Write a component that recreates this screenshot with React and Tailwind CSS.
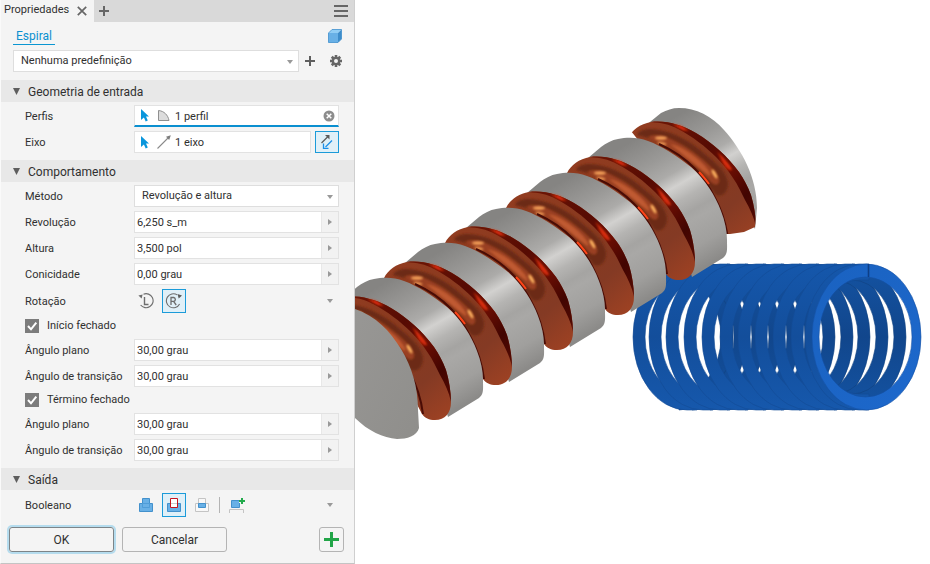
import React, { useState } from "react";

const STEP_X = 61;
const STEP_Y = -35;

const grooves = [5, 4, 3, 2, 1, 0];

// centres of the visible half turns of the spring
const backTurns = [679, 692, 710, 727, 745, 763, 781, 799, 816, 834, 852];
const frontTurns = [687, 703, 720, 738, 756, 774, 792, 809, 827, 845, 859];

const backTurn = (cx) => `M${cx} 264 A54 73 0 0 1 ${cx} 410 V394 A42 57 0 0 0 ${cx} 280 Z`;

const frontTurn = (cx) =>
  `M${cx + 10} 264 H${cx} A54 73 0 0 0 ${cx} 410 H${cx + 10} V394 H${cx} A42 57 0 0 1 ${cx} 280 H${cx + 10} Z`;

const CursorIcon = () => (
  <svg className="shrink-0" width="8" height="13" viewBox="0 0 8 13" aria-hidden="true">
    <path d="M0 0 L8 7.5 H5 L6.8 11.6 L4.7 12.6 L2.9 8.6 L0 11 Z" fill="#0a96dc" />
  </svg>
);

const ProfileIcon = () => (
  <svg className="shrink-0" width="14" height="14" viewBox="0 0 14 14" aria-hidden="true">
    <path d="M1.5 1.5 C7 2 11 6 12 11.5 H1.5 Z" fill="#dcdcdc" stroke="#8f8f8f" />
  </svg>
);

const AxisIcon = () => (
  <svg className="shrink-0" width="14" height="14" viewBox="0 0 14 14" aria-hidden="true">
    <path d="M0.5 13.5 L11 3" stroke="#8a8a8a" strokeWidth="1.1" />
    <path d="M13.8 0.2 L9 1.8 L12.2 5 Z" fill="#7d7d7d" />
  </svg>
);

const FlipIcon = () => (
  <svg width="12" height="14" viewBox="0 0 12 14" aria-hidden="true">
    <path d="M0.5 8 L7 1.5" stroke="#5a5a5a" strokeWidth="1.2" />
    <path d="M8.5 0 V4.5 L4 0 Z" fill="#5a5a5a" />
    <path d="M11 5.5 L4.5 12" stroke="#1a8fe8" strokeWidth="1.3" />
    <path d="M2.5 8.5 V13.5 H7.5" fill="none" stroke="#1a8fe8" strokeWidth="1.3" />
  </svg>
);

const RotationIcon = ({ letter }) => (
  <svg width="18" height="16" viewBox="0 0 18 16" aria-hidden="true">
    {letter === "L" ? (
      <>
        <path d="M6.5 1.2 A7 7 0 1 1 3.6 12" fill="none" stroke="#6d6d6d" strokeWidth="1.1" />
        <path d="M1.4 2.4 L5.6 1.6 L4.6 5.4 Z" fill="#6d6d6d" />
        <path d="M7.5 4 V11.5 H11.5" fill="none" stroke="#6d6d6d" strokeWidth="1.4" />
      </>
    ) : (
      <>
        <path d="M12.2 1.9 A7 7 0 1 0 14.6 11" fill="none" stroke="#6d6d6d" strokeWidth="1.1" />
        <path d="M17 2.4 L12.5 1 L13.7 5.6" fill="#5a5a5a" />
        <path d="M6 12 V4.5 H8.8 A2 2 0 0 1 8.8 8.4 H6 M8.6 8.4 L11.2 12" fill="none" stroke="#6d6d6d" strokeWidth="1.3" />
      </>
    )}
  </svg>
);

const CubeIcon = () => (
  <svg width="14" height="14" viewBox="0 0 14 14" aria-hidden="true">
    <path d="M0.5 4 L4 0.5 H13.5 L10 4 Z" fill="#90cdf5" />
    <path d="M10 4 L13.5 0.5 V10 L10 13.5 Z" fill="#3d8cca" />
    <path d="M0.5 4 H10 V13.5 H0.5 Z" fill="#68b0e6" />
    <path d="M0.5 4 L4 0.5 H13.5 V10 L10 13.5 H0.5 Z" fill="none" stroke="#3f8fcd" strokeWidth="0.8" />
  </svg>
);

const GearIcon = () => (
  <svg width="12" height="12" viewBox="-6 -6 12 12" aria-hidden="true">
    {[0, 45, 90, 135].map((angle) => (
      <rect key={angle} x="-1.3" y="-6" width="2.6" height="12" fill="#666" transform={`rotate(${angle})`} />
    ))}
    <circle r="4.3" fill="#666" />
    <circle r="2" fill="#f4f4f4" />
  </svg>
);

const BooleanIcon = ({ kind }) => {
  if (kind === "join") {
    return (
      <svg width="14" height="14" viewBox="0 0 14 14" aria-hidden="true">
        <path d="M3.5 0.5 H10.5 V5.5 H13.5 V13.5 H0.5 V5.5 H3.5 Z" fill="#68b0e6" stroke="#4391cc" />
        <path d="M3.5 5.5 V9.5 H10.5 V5.5 Z" fill="none" stroke="#4f9dd8" />
      </svg>
    );
  }
  if (kind === "cut") {
    return (
      <svg width="14" height="14" viewBox="0 0 14 14" aria-hidden="true">
        <path d="M0.5 5.5 H13.5 V13.5 H0.5 Z" fill="#68b0e6" stroke="#4391cc" />
        <path d="M3.5 0.5 H10.5 V9.5 H3.5 Z" fill="#fff" stroke="#c8141e" />
        <path d="M4 5.5 H10" stroke="#ccc" />
      </svg>
    );
  }
  if (kind === "intersect") {
    return (
      <svg width="14" height="14" viewBox="0 0 14 14" aria-hidden="true">
        <path d="M0.5 5.5 H13.5 V13.5 H0.5 Z M3.5 0.5 H10.5 V5.5 H3.5 Z" fill="#f8f8f8" stroke="#c4c4c4" />
        <path d="M3.5 5.5 H10.5 V9.5 H3.5 Z" fill="#68b0e6" stroke="#4391cc" />
      </svg>
    );
  }
  return (
    <svg width="16" height="16" viewBox="0 0 16 16" aria-hidden="true">
      <path d="M2.5 3.5 H10.5 V10.5 H2.5 Z" fill="#68b0e6" stroke="#4391cc" />
      <path d="M0.5 16 V12.5 H14.5 V16" fill="none" stroke="#c4c4c4" />
      <path d="M13 1 V7 M10 4 H16" stroke="#f4f4f4" strokeWidth="4" />
      <path d="M13 1 V7 M10 4 H16" stroke="#22aa4b" strokeWidth="2" />
    </svg>
  );
};

const DownArrow = ({ className }) => (
  <svg className={className} width="6" height="4" viewBox="0 0 6 4" aria-hidden="true">
    <path d="M0 0 H6 L3 4 Z" fill="#999" />
  </svg>
);

const Section = ({ title, children }) => (
  <section className="pb-[5px]">
    <h2 className="flex h-[22px] items-center gap-2 bg-[#e8e8e8] pt-px pl-3 text-[12px]">
      <svg width="7" height="7" viewBox="0 0 7 7" aria-hidden="true">
        <path d="M0 0 H7 L3.5 7 Z" fill="#5e5e5e" />
      </svg>
      {title}
    </h2>
    <div className="pt-px pr-[15px] pl-6">{children}</div>
  </section>
);

const Row = ({ label, htmlFor, tall, children }) => (
  <div className={tall ? "flex h-7 items-center" : "flex h-[26px] items-center"}>
    <label htmlFor={htmlFor} className="w-[109px] shrink-0 pt-px whitespace-nowrap">
      {label}
    </label>
    <div className="flex min-w-0 flex-1 items-center">{children}</div>
  </div>
);

const ValueRow = ({ id, label, value }) => (
  <Row label={label} htmlFor={id}>
    <div className="flex h-[22px] w-full border border-[#e2e2e2] bg-white">
      <input id={id} type="text" defaultValue={value} className="min-w-0 flex-1 px-0.5 pt-0.5 outline-none" />
      <button type="button" aria-label="Mais opções" className="flex w-[17px] items-center justify-center border-l border-[#e8e8e8] bg-[#f2f2f2]">
        <svg width="4" height="6" viewBox="0 0 4 6" aria-hidden="true">
          <path d="M0 0 L4 3 L0 6 Z" fill="#999" />
        </svg>
      </button>
    </div>
  </Row>
);

const CheckRow = ({ label }) => (
  <label className="flex h-[22px] items-center gap-2">
    <span className="relative flex size-[14px]">
      <input type="checkbox" defaultChecked className="peer size-[14px] appearance-none bg-[#7c7c7c]" />
      <svg className="pointer-events-none absolute inset-0 hidden peer-checked:block" width="14" height="14" viewBox="0 0 14 14" aria-hidden="true">
        <path d="M3 7 L6 10.3 L11.3 3.6" fill="none" stroke="#fff" strokeWidth="2" />
      </svg>
    </span>
    {label}
  </label>
);

const ToggleButton = ({ active, label, onClick, children }) => (
  <button
    type="button"
    aria-label={label}
    aria-pressed={active}
    onClick={onClick}
    className={
      active
        ? "flex size-6 items-center justify-center border border-[#1b9bd9] bg-[#e0f0f8]"
        : "flex size-6 items-center justify-center"
    }
  >
    {children}
  </button>
);

const PropertiesPanel = () => {
  const [rotation, setRotation] = useState("R");
  const [operation, setOperation] = useState("cut");
  const [flipped, setFlipped] = useState(true);

  return (
    <aside className="w-[355px] shrink-0 border-r border-b border-l border-r-[#cfcfcf] border-b-[#c4c4c4] border-l-[#fafafa] bg-[#f4f4f4]">
      <div className="flex h-[22px] items-center bg-[#d9d9d9]">
        <div className="flex h-full w-[93px] items-center justify-between bg-[#f4f4f4] pr-[7px] pl-[3px]">
          <span className="pb-0.5">Propriedades</span>
          <button type="button" aria-label="Fechar">
            <svg width="10" height="10" viewBox="0 0 10 10" aria-hidden="true">
              <path d="M0.8 0.8 L9.2 9.2 M9.2 0.8 L0.8 9.2" stroke="#666" strokeWidth="1.7" />
            </svg>
          </button>
        </div>
        <button type="button" aria-label="Nova guia" className="ml-[5px]">
          <svg width="10" height="10" viewBox="0 0 10 10" aria-hidden="true">
            <path d="M5 0 V10 M0 5 H10" stroke="#666" strokeWidth="2" />
          </svg>
        </button>
        <button type="button" aria-label="Menu" className="mr-[6px] ml-auto">
          <svg width="14" height="12" viewBox="0 0 14 12" aria-hidden="true">
            <path d="M0 1 H14 M0 6 H14 M0 11 H14" stroke="#666" strokeWidth="2" />
          </svg>
        </button>
      </div>

      <div className="flex h-7 items-center justify-between pr-3 pl-3">
        <a href="#espiral" className="border-b border-[#0a96d2] px-[3px] text-[12px] text-[#0a90d0]">
          Espiral
        </a>
        <CubeIcon />
      </div>
      <div className="flex h-[30px] items-start pr-3 pl-3">
        <div className="relative w-[286px]">
          <select aria-label="Predefinição" className="h-[22px] w-full appearance-none border border-[#dedede] bg-white pl-[7px]">
            <option>Nenhuma predefinição</option>
          </select>
          <DownArrow className="pointer-events-none absolute top-[10px] right-[6px]" />
        </div>
        <button type="button" aria-label="Adicionar predefinição" className="ml-[6px] flex h-[22px] items-center">
          <svg width="10" height="10" viewBox="0 0 10 10" aria-hidden="true">
            <path d="M5 0 V10 M0 5 H10" stroke="#5e5e5e" strokeWidth="2" />
          </svg>
        </button>
        <button type="button" aria-label="Configurações" className="ml-auto flex h-[22px] items-center">
          <GearIcon />
        </button>
      </div>

      <Section title="Geometria de entrada">
        <Row label="Perfis" htmlFor="perfis">
          <div className="flex h-[22px] w-full items-center gap-2 border border-b-2 border-[#e2e2e2] border-b-[#0a8fd0] bg-white pr-[3px] pl-[6px]">
            <CursorIcon />
            <ProfileIcon />
            <input id="perfis" type="text" defaultValue="1 perfil" className="-ml-1 min-w-0 flex-1 pt-0.5 outline-none" />
            <button type="button" aria-label="Limpar">
              <svg width="12" height="12" viewBox="0 0 12 12" aria-hidden="true">
                <circle cx="6" cy="6" r="5.5" fill="#8c8c8c" />
                <path d="M3.7 3.7 L8.3 8.3 M8.3 3.7 L3.7 8.3" stroke="#fff" strokeWidth="1.5" />
              </svg>
            </button>
          </div>
        </Row>
        <Row label="Eixo" htmlFor="eixo">
          <div className="flex h-[22px] min-w-0 flex-1 items-center gap-2 border border-[#e2e2e2] bg-white pl-[6px]">
            <CursorIcon />
            <AxisIcon />
            <input id="eixo" type="text" defaultValue="1 eixo" className="-ml-1 min-w-0 flex-1 pt-0.5 outline-none" />
          </div>
          <button
            type="button"
            aria-label="Inverter eixo"
            aria-pressed={flipped}
            onClick={() => setFlipped(!flipped)}
            className="ml-1 flex h-[22px] w-6 items-center justify-center border border-[#1b9bd9] bg-[#e0f0f8]"
          >
            <FlipIcon />
          </button>
        </Row>
      </Section>

      <Section title="Comportamento">
        <Row label="Método" htmlFor="metodo">
          <div className="relative w-full">
            <select id="metodo" className="block h-[22px] w-full appearance-none border border-[#dedede] bg-white pl-[7px]">
              <option>Revolução e altura</option>
            </select>
            <DownArrow className="pointer-events-none absolute top-[10px] right-[6px]" />
          </div>
        </Row>
        <ValueRow id="revolucao" label="Revolução" value="6,250 s_m" />
        <ValueRow id="altura" label="Altura" value="3,500 pol" />
        <ValueRow id="conicidade" label="Conicidade" value="0,00 grau" />
        <Row label="Rotação" tall>
          <ToggleButton label="Esquerda" active={rotation === "L"} onClick={() => setRotation("L")}>
            <RotationIcon letter="L" />
          </ToggleButton>
          <span className="w-1" />
          <ToggleButton label="Direita" active={rotation === "R"} onClick={() => setRotation("R")}>
            <RotationIcon letter="R" />
          </ToggleButton>
          <DownArrow className="mr-[6px] ml-auto" />
        </Row>
        <CheckRow label="Início fechado" />
        <ValueRow id="inicio-plano" label="Ângulo plano" value="30,00 grau" />
        <ValueRow id="inicio-transicao" label="Ângulo de transição" value="30,00 grau" />
        <CheckRow label="Término fechado" />
        <ValueRow id="termino-plano" label="Ângulo plano" value="30,00 grau" />
        <ValueRow id="termino-transicao" label="Ângulo de transição" value="30,00 grau" />
      </Section>

      <Section title="Saída">
        <Row label="Booleano" tall>
          <div className="flex items-center gap-1">
            <ToggleButton label="União" active={operation === "join"} onClick={() => setOperation("join")}>
              <BooleanIcon kind="join" />
            </ToggleButton>
            <ToggleButton label="Recorte" active={operation === "cut"} onClick={() => setOperation("cut")}>
              <BooleanIcon kind="cut" />
            </ToggleButton>
            <ToggleButton label="Interseção" active={operation === "intersect"} onClick={() => setOperation("intersect")}>
              <BooleanIcon kind="intersect" />
            </ToggleButton>
            <span className="mx-px h-4 w-px bg-[#b4b4b4]" />
            <ToggleButton label="Novo sólido" active={operation === "new"} onClick={() => setOperation("new")}>
              <BooleanIcon kind="new" />
            </ToggleButton>
          </div>
          <DownArrow className="mr-[6px] ml-auto" />
        </Row>
      </Section>

      <div className="flex gap-2 pt-[3px] pr-[10px] pb-[11px] pl-2 text-[12px]">
        <button type="button" className="h-[25px] w-[105px] rounded-[3px] border border-[#7d8488] ring-2 ring-[#b5dcee]">
          OK
        </button>
        <button type="button" className="h-[25px] w-[105px] rounded-[3px] border border-[#b4b4b4]">
          Cancelar
        </button>
        <button type="button" aria-label="Aplicar" className="ml-auto flex size-[25px] items-center justify-center rounded-[3px] border border-[#b4b4b4]">
          <svg width="15" height="15" viewBox="0 0 15 15" aria-hidden="true">
            <path d="M7.5 0 V15 M0 7.5 H15" stroke="#22a548" strokeWidth="3" />
          </svg>
        </button>
      </div>
    </aside>
  );
};

const Spring = () => (
  <g>
    {backTurns.map((cx) => (
      <path key={cx} d={backTurn(cx)} fill="url(#springBack)" stroke="#10427f" strokeWidth="0.6" />
    ))}
    {frontTurns.map((cx) => (
      <path key={cx} d={frontTurn(cx)} fill="url(#springFront)" stroke="#124a94" strokeWidth="0.6" />
    ))}
    <path
      d="M812 337 A54.5 73 0 1 1 921 337 A54.5 73 0 1 1 812 337 Z M819 337 A46.5 60 0 1 0 912 337 A46.5 60 0 1 0 819 337 Z"
      fill="url(#springEnd)"
      fillRule="evenodd"
      stroke="#1450a4"
      strokeWidth="0.6"
    />
    <path d="M868.5 264 V277" stroke="#0e3f86" strokeWidth="1.6" />
  </g>
);

const Band = () => (
  <path
    d="M405 263 L418 252 C423 248 429 245 435 244 C444 242 455 242 465 246 C479 251 494 261 508 272 C522 284 533 302 538 316 C542 326 544 336 544 345 C544 354 545 359 540 363 L509 382 L490 320 Z"
    fill="url(#steel)"
  />
);

const Groove = () => (
  <g>
    <path
      d="M384 278 C388 270 396 264 407 262 C422 260 438 265 452 273 C461 278 468 284 475 290 C483 297 489 304 495 312 C500 319 504 327 507 335 C510 345 512 357 512 367 C512 378 506 385 496 385 C490 385 486 383 483 379 L460 335 L420 295 Z"
      fill="url(#copper)"
    />
    {/* shaded wall */}
    <path
      d="M407 262 C422 260 438 265 452 273 C461 278 468 284 475 290 C483 297 489 304 495 312 C500 319 504 327 507 335 C510 345 512 357 512 367 C510 357 506 349 501 340 C497 332 494 325 489 318 C484 310 478 303 472 297 C462 287 448 276 434 269 C425 264 417 263 407 262 Z"
      fill="url(#wall)"
    />
    <g filter="url(#softEdge)">
      <path
        d="M393 275 C395 269 406 267 420 271 C436 275 451 285 462 295 C474 304 483 314 484 323 C484 333 478 337 472 335 L440 296 L412 280 Z"
        fill="#6c2c16"
      />
      <path d="M404 277 C414 271 434 281 449 292 C462 302 473 311 475 319 C476 326 470 326 466 321 C454 307 440 297 422 287 Z" fill="#9a3f20" />
      <path d="M426 284 C437 286 449 294 459 304 C464 309 467 314 466 316 C456 309 442 297 426 284 Z" fill="#c05a30" />
      <path d="M428 264 L437 266 L445 271 L439 270 Z" fill="#f8300c" />
      <path d="M473 292 C479 297 485 304 488 310 L486 310 C482 304 477 298 473 292 Z" fill="#ff3a12" />
      <path d="M475 297 C480 302 483 306 485 311 L482 308 Z" fill="#e8300c" />
    </g>
    <g filter="url(#glint)">
      <ellipse cx="417" cy="278" rx="6" ry="1.8" fill="#f4a058" />
      <ellipse cx="418" cy="283.5" rx="4.5" ry="1.2" fill="#f4a058" transform="rotate(12 418 283)" />
      <ellipse cx="470.5" cy="314" rx="5" ry="1.5" fill="#ffb560" transform="rotate(60 470.5 314)" />
    </g>
    <path d="M415 284 C446 298 461 318 471 338 C478 351 482 363 484 379" fill="none" stroke="#4a0c05" strokeWidth="2" />
    <path d="M455 312 C459 316 462 320 465 324" fill="none" stroke="#ff4418" strokeWidth="2" />
  </g>
);

const Shaft = () => (
  <g>
    <path
      d="M645 126 L661 113 C667 110 672 108 679 108 C696 108 712 116 724 130 C742 150 757 178 757 208 L755 229 L735 190 Z"
      fill="url(#steel)"
    />
    {grooves.map((n) => (
      <g key={n} transform={`translate(${(n - 1) * STEP_X} ${(n - 1) * STEP_Y})`}>
        {n < 5 && <Band />}
        <g clipPath={n === 5 ? "url(#lastGroove)" : undefined}>
          <Groove />
        </g>
      </g>
    ))}
    {/* band in front of the first groove, cut by the end face */}
    <path
      d="M340 304 L355 309 C376 316 390 331 401 349 C412 367 418 387 418 410 L419 428 C417 436 407 439 397 439 C382 438 366 430 352 415 Z"
      fill="url(#steelFace)"
    />
  </g>
);

const Viewport = () => (
  <main className="min-w-0 flex-1">
    <svg className="block h-auto w-full" viewBox="355 0 575 564" role="img" aria-label="Eixo com ranhura espiral e mola">
      <defs>
        <linearGradient id="steel" gradientUnits="userSpaceOnUse" x1="393" y1="278" x2="465" y2="404">
          <stop offset="0" stopColor="#858482" />
          <stop offset="0.2" stopColor="#9a9997" />
          <stop offset="0.33" stopColor="#acaba9" />
          <stop offset="0.42" stopColor="#d2d1cf" />
          <stop offset="0.52" stopColor="#b5b4b2" />
          <stop offset="0.62" stopColor="#a5a4a2" />
          <stop offset="0.68" stopColor="#a9a8a6" />
          <stop offset="0.85" stopColor="#a09f9d" />
          <stop offset="1" stopColor="#8b8a88" />
        </linearGradient>
        <linearGradient id="steelFace" x1="0" y1="0" x2="1" y2="1">
          <stop offset="0" stopColor="#999896" />
          <stop offset="1" stopColor="#8f8e8b" />
        </linearGradient>
        <linearGradient id="copper" gradientUnits="userSpaceOnUse" x1="400" y1="265" x2="500" y2="385">
          <stop offset="0" stopColor="#913c20" />
          <stop offset="0.5" stopColor="#86391f" />
          <stop offset="0.75" stopColor="#843a24" />
          <stop offset="1" stopColor="#9c4123" />
        </linearGradient>
        <linearGradient id="wall" gradientUnits="userSpaceOnUse" x1="407" y1="262" x2="512" y2="367">
          <stop offset="0" stopColor="#6e1605" />
          <stop offset="0.4" stopColor="#560b03" />
          <stop offset="0.6" stopColor="#6c0e03" />
          <stop offset="0.8" stopColor="#420501" />
          <stop offset="1" stopColor="#560b03" />
        </linearGradient>
        <linearGradient id="springBack" gradientUnits="userSpaceOnUse" x1="0" y1="264" x2="0" y2="410">
          <stop offset="0" stopColor="#1453a2" />
          <stop offset="0.5" stopColor="#11468c" />
          <stop offset="1" stopColor="#1453a2" />
        </linearGradient>
        <linearGradient id="springFront" gradientUnits="userSpaceOnUse" x1="0" y1="264" x2="0" y2="410">
          <stop offset="0" stopColor="#1557ab" />
          <stop offset="0.5" stopColor="#134e9b" />
          <stop offset="1" stopColor="#1658ac" />
        </linearGradient>
        <linearGradient id="springEnd" x1="0" y1="0" x2="1" y2="1">
          <stop offset="0" stopColor="#1a62c0" />
          <stop offset="1" stopColor="#1d68cc" />
        </linearGradient>
        <filter id="softEdge" x="-10%" y="-10%" width="120%" height="120%">
          <feGaussianBlur stdDeviation="1" />
        </filter>
        <filter id="glint" x="-20%" y="-20%" width="140%" height="140%">
          <feGaussianBlur stdDeviation="0.8" />
        </filter>
        <clipPath id="lastGroove">
          <path d="M370 250 H520 L511 367 L500 372 L486 374 L470 374 Z" />
        </clipPath>
      </defs>
      <Spring />
      <Shaft />
    </svg>
  </main>
);

const App = () => {
  return (
    <div className="flex min-h-screen items-start bg-white font-['Roboto',sans-serif] text-[11px] leading-4 text-[#303030]">
      <PropertiesPanel />
      <Viewport />
    </div>
  );
};

export default App;
